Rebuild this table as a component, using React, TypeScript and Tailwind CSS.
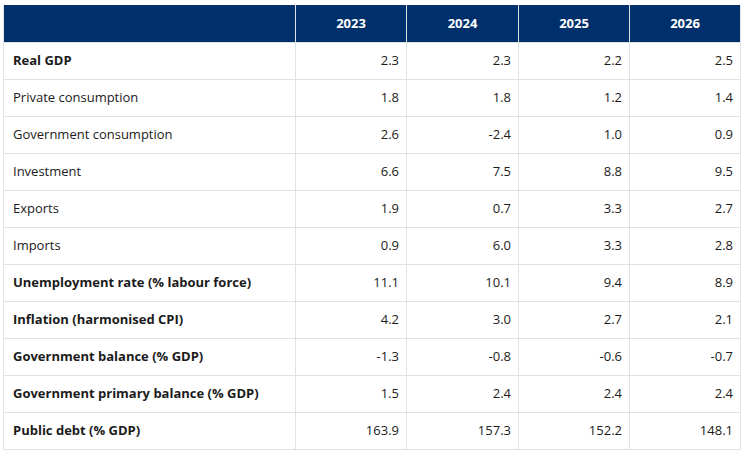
import React from "react";

const rows: [string, boolean, string[]][] = [
  ["Real GDP", true, ["2.3", "2.3", "2.2", "2.5"]],
  ["Private consumption", false, ["1.8", "1.8", "1.2", "1.4"]],
  ["Government consumption", false, ["2.6", "-2.4", "1.0", "0.9"]],
  ["Investment", false, ["6.6", "7.5", "8.8", "9.5"]],
  ["Exports", false, ["1.9", "0.7", "3.3", "2.7"]],
  ["Imports", false, ["0.9", "6.0", "3.3", "2.8"]],
  ["Unemployment rate (% labour force)", true, ["11.1", "10.1", "9.4", "8.9"]],
  ["Inflation (harmonised CPI)", true, ["4.2", "3.0", "2.7", "2.1"]],
  ["Government balance (% GDP)", true, ["-1.3", "-0.8", "-0.6", "-0.7"]],
  ["Government primary balance (% GDP)", true, ["1.5", "2.4", "2.4", "2.4"]],
  ["Public debt (% GDP)", true, ["163.9", "157.3", "152.2", "148.1"]],
];

export default function App() {
  return (
    <div className="w-[746px] h-[455px] bg-white pl-[3px] pt-[5px]" style={{ fontFamily: '"Open Sans", sans-serif' }}>
      <table className="w-[737px] border-collapse table-fixed text-[13px] text-[#1b1b1b]">
        <colgroup>
          <col className="w-[292px]" />
          <col className="w-[111px]" />
          <col className="w-[112px]" />
          <col className="w-[111px]" />
          <col className="w-[111px]" />
        </colgroup>
        <thead>
          <tr className="h-[37px] bg-[#00306b] text-white">
            <th className="border-x border-[#dfe3e8] border-t-0"></th>
            {["2023", "2024", "2025", "2026"].map((y) => (
              <th key={y} className="border-x border-[#dfe3e8] text-center font-bold">
                {y}
              </th>
            ))}
          </tr>
        </thead>
        <tbody>
          {rows.map(([label, bold, vals]) => (
            <tr key={label} className="h-[37px]">
              <td className={`border border-[#dfe3e8] pl-[9px] ${bold ? "font-bold" : "font-normal"}`}>{label}</td>
              {vals.map((v, i) => (
                <td key={i} className="border border-[#dfe3e8] text-right pr-[7px]">
                  {v}
                </td>
              ))}
            </tr>
          ))}
        </tbody>
      </table>
    </div>
  );
}
